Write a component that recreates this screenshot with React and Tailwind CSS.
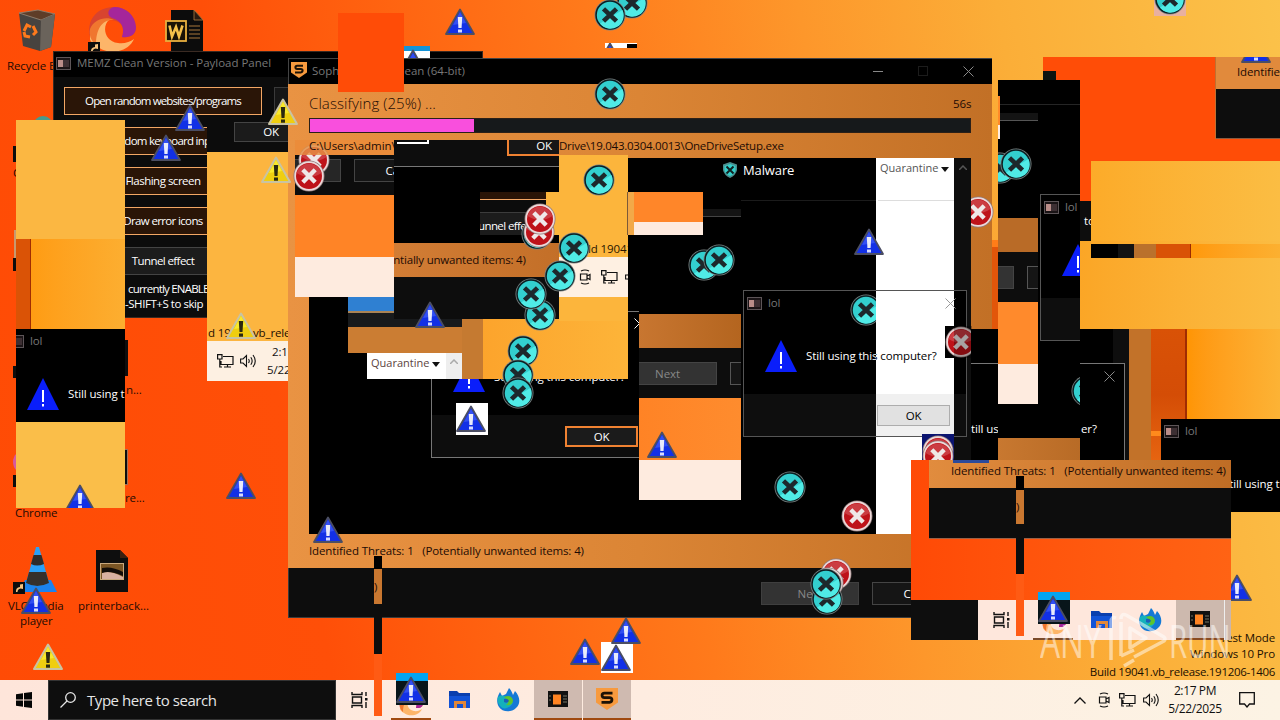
import React from 'react';
import clsx from 'clsx';

// everything on the desktop canvas is a free floating piece
const Box = ({ c, children }) => <div className={clsx('absolute overflow-hidden', c)}>{children}</div>;
const T = ({ c, children }) => (
  <span className={clsx('absolute whitespace-pre leading-[16px]', c)}>{children}</span>
);

const BlueWarn = ({ c }) => (
  <svg className={clsx('absolute w-8 h-8', c)} viewBox="0 0 32 32">
    <path d="M16 3.5 L30 28 H2 Z" fill="#1230e6" stroke="#4b4e63" strokeWidth="1.8" strokeLinejoin="round" />
    <path d="M16 6 L22 17 L9 19 Z" fill="#3350f2" />
    <path d="M13.800 11h4.400l-.6 11h-3.200z" fill="#e8ebfb" />
    <rect x="14" y="23.500" width="4" height="3" fill="#d5daff" />
  </svg>
);

const YellowWarn = ({ c }) => (
  <svg className={clsx('absolute w-8 h-8', c)} viewBox="0 0 32 32">
    <path d="M16 3.5 L30 28 H2 Z" fill="#efce10" stroke="#c9c3a2" strokeWidth="2" strokeLinejoin="round" />
    <path d="M16 6 L22 17 L9 19 Z" fill="#f8e92c" />
    <path d="M13.8 11h4.4l-.7 11h-3z" fill="#2b2910" />
    <rect x="14" y="23.5" width="4" height="3.2" fill="#2b2910" />
  </svg>
);

const FlatWarn = ({ c }) => (
  <svg className={clsx('absolute w-8 h-8', c)} viewBox="0 0 32 32">
    <path d="M16 0 L32 32 H0 Z" fill="#0a1efa" />
    <rect x="15" y="12" width="2" height="12" fill="#fff" />
    <rect x="15" y="26" width="2" height="2.5" fill="#fff" />
  </svg>
);

const Cyan = ({ c }) => (
  <svg className={clsx('absolute w-8 h-8', c)} viewBox="0 0 32 32">
    <circle cx="16" cy="16" r="15.5" fill="#7d8585" />
    <circle cx="16" cy="16" r="14.700" fill="#0b1f22" />
    <circle cx="16" cy="16" r="13.2" fill="#33cfcf" />
    <path d="M6 24.500a13.2 13.2 0 0 0 22.500 -13.500z" fill="#50ebe6" />
    <path d="M9.500 9.800 L22.500 22.200 M22.500 9.800 L9.500 22.200" stroke="#1d282c" strokeWidth="4.6" />
  </svg>
);

const Red = ({ c }) => (
  <svg className={clsx('absolute w-8 h-8', c)} viewBox="0 0 32 32">
    <circle cx="16" cy="16" r="15.5" fill="#8e7a7a" />
    <circle cx="16" cy="16" r="14.700" fill="#ecd8d8" />
    <circle cx="16" cy="16" r="13" fill="#be1219" />
    <path d="M3.5 13a13 13 0 0 1 25 0 q-12 8 -25 0z" fill="#cb3c42" />
    <path d="M9.800 9.800 L22.200 22.200 M22.200 9.800 L9.800 22.200" stroke="#efe8e8" strokeWidth="4.4" />
  </svg>
);

const AppIcon = ({ c }) => (
  <svg className={clsx('absolute w-[15px] h-[13px]', c)} viewBox="0 0 15 13">
    <rect x=".5" y=".5" width="14" height="12" fill="#1a1416" stroke="#5d5558" />
    <rect x="2" y="3" width="5" height="7" fill="#b98d89" />
    <rect x="7" y="3" width="6" height="7" fill="#3d2f33" />
  </svg>
);

const Close = ({ c, color = '#8a8a8a' }) => (
  <svg className={clsx('absolute w-[11px] h-[11px]', c)} viewBox="0 0 11 11">
    <path d="M.5 .5 L10.5 10.5 M10.5 .5 L.5 10.5" stroke={color} fill="none" />
  </svg>
);

const SophosLogo = ({ className }) => (
  <svg className={className} viewBox="0 0 16 16">
    <path d="M0 0H16V10.5L8 16L0 10.5Z" fill="#f79a3e" />
    <path d="M12 3.7H6.2Q4.4 3.7 4.4 5.3T6.2 7H9.8Q11.6 7 11.6 8.6T9.8 10.4H4" stroke="#1d1206" strokeWidth="2" fill="none" />
  </svg>
);

const TaskView = ({ className }) => (
  <svg className={className} viewBox="0 0 18 16" fill="none" stroke="#111" strokeWidth="1.4">
    <path d="M1 0V2.5H11V0M1 16V13.5H11V16M1.5 5H10.5V11H1.5ZM15 0V4M15 10V16" />
    <rect x="14" y="6" width="2.5" height="2.5" fill="#111" stroke="none" />
  </svg>
);

const Explorer = ({ className }) => (
  <svg className={className} viewBox="0 0 22 20">
    <path d="M0 1H8L10 3H21V18H0Z" fill="#0a3fae" />
    <path d="M0 6H21V18H0Z" fill="#1253d6" />
    <path d="M5 18V11H17V18H14V14H8V18Z" fill="#e0873a" />
  </svg>
);

const Firefox = ({ className }) => (
  <svg className={className} viewBox="0 0 24 24">
    <path d="M13 0C15 2 16 4 17 7L19 3C24 8 25 16 20 20C15 25 6 24 3 19C0 14 1 9 4 4L6 8L10 6Z" fill="#1479d6" />
    <path d="M2 9C6 6 10 8 11 11L17 14C15 20 8 22 5 19C2 16 1 12 2 9Z" fill="#14b0bc" />
    <path d="M8 9Q15 6 17 12Q17 18 10 17Q15 14 8 9Z" fill="#5cc42e" />
    <path d="M8 11Q12 10 13 13Q11 16 8 14Z" fill="#1b5fb8" />
  </svg>
);

const EdgeIcon = ({ className }) => (
  <svg className={className} viewBox="0 0 48 44">
    <path d="M2 30C-2 12 10 0 26 0C38 0 47 8 48 20C48 28 42 31 34 30C38 20 32 13 22 13C12 13 4 20 2 30Z" fill="#d8442f" />
    <path d="M26 0C38 0 47 8 48 20C48 28 42 31 34 30C37 21 34 14 24 11C18 8 20 1 26 0Z" fill="#a5269a" />
    <path d="M2 32C2 20 10 12 21 13C14 19 16 34 30 36C36 37 42 35 46 32C40 46 20 48 10 40C5 37 2 34 2 32Z" fill="#fdb569" />
    <path d="M2 22C6 12 18 9 26 13C14 12 8 22 8 38C3 34 1 28 2 22Z" fill="#f0762f" />
  </svg>
);

const ConsoleApp = ({ className }) => (
  <svg className={className} viewBox="0 0 20 16">
    <rect width="20" height="16" fill="#111" />
    <rect x="5" y="3.5" width="8" height="10" fill="#ff8423" />
    <path d="M15 5H19M15 8H19M15 11H19M1 5H3M1 9H3" stroke="#776" />
  </svg>
);

const Net = ({ className }) => (
  <svg className={className} viewBox="0 0 17 14" fill="none" stroke="#111" strokeWidth="1.2">
    <path d="M6 2.5H16V10.5H4V7M10.5 10.5V13M7 13H14M.6 .6H5V5H.6ZM2.8 5V13H5" />
  </svg>
);

const Speaker = ({ className }) => (
  <svg className={className} viewBox="0 0 17 14" fill="none" stroke="#111" strokeWidth="1.1">
    <path d="M.6 5H3L6.5 1.5V12.5L3 9H.6ZM8.5 5Q10 7 8.5 9M10.8 3.2Q13.5 7 10.8 10.8M13 1Q17.5 7 13 13" />
  </svg>
);

const Meet = ({ className }) => (
  <svg className={className} viewBox="0 0 12 16" fill="none" stroke="#111" strokeWidth="1.2">
    <path d="M1.5 5H8V11H1.5ZM8 7L11 5.5V10.5L8 9M2 2Q6 0 10 2M2 14Q6 16 10 14" />
  </svg>
);

const Shortcut = ({ c }) => (
  <svg className={clsx('absolute w-3 h-3', c)} viewBox="0 0 12 12">
    <rect width="12" height="12" fill="#0d0d0d" />
    <path d="M3 10Q2.5 5.5 7 5V2.5L10 2V7L7.5 6.5Q4.5 7 4.5 10Z" fill="#f6c37e" />
  </svg>
);

const WinBtn = ({ c, children }) => (
  <div className={clsx('absolute flex items-center justify-center whitespace-nowrap border', c)}>{children}</div>
);

const DesktopIcons = () => (
  <>
    <svg className="absolute left-[18px] top-[9px] w-[38px] h-[42px]" viewBox="0 0 38 42">
      <path d="M1 4L20 1L37 5L33 38L22 42L5 37Z" fill="#47433f" />
      <path d="M1 4L20 1L37 5L23 11Z" fill="#5e3d28" stroke="#9a8a78" strokeWidth=".8" />
      <path d="M23 11L37 5L33 38L22 42Z" fill="#6a635b" />
      <path d="M6 22L9 16L13 18M15 17L18 23L15 26M12 28L7 27L6 23" stroke="#ff7a1c" strokeWidth="3" fill="none" />
    </svg>
    <T c="left-[7px] top-[58px] tracking-[-0.1px]">Recycle Bin</T>
    <EdgeIcon className="absolute left-[88px] top-[7px] w-12 h-11" />
    <Shortcut c="left-[88px] top-[42px]" />
    <svg className="absolute left-[165px] top-[10px] w-[38px] h-[42px]" viewBox="0 0 38 42">
      <path d="M6 0H29L38 10V42H6Z" fill="#0c0c0c" />
      <path d="M29 0L38 10H29Z" fill="#2a1a10" stroke="#b07c40" strokeWidth=".8" />
      <rect x="1" y="11" width="20" height="20" fill="#1a1206" stroke="#e8b040" strokeWidth="1.8" />
      <path d="M4.5 15.5L7 26.5L11 17L14 26.5L17.5 15.5" stroke="#f4c04a" strokeWidth="2.6" fill="none" />
      <path d="M24 16H35M24 20H35M24 24H35M24 28H35" stroke="#a8763a" />
    </svg>

    <Box c="left-[33px] top-[116px] w-5 h-5 rounded-full bg-[#4a9a8c]" />
    <Box c="left-[13px] top-[146px] w-4 h-4 bg-[#0d0d0d]" />
    <T c="left-[13px] top-[165px]">C</T>
    <Box c="left-[13px] top-[258px] w-4 h-[13px] bg-[#0d0d0d]" />
    <Box c="left-[14px] top-[230px] w-4 h-7 bg-[#c79a70]" />
    <Box c="left-[13px] top-[366px] w-4 h-[12px] bg-[#0d0d0d]" />
    <Box c="left-[13px] top-[450px] w-6 h-6 rounded-full bg-[#d65aa0]" />
    <Box c="left-[13px] top-[475px] w-4 h-[12px] bg-[#0d0d0d]" />
    <Box c="left-[110px] top-[340px] w-[18px] h-9 bg-[#0d0d0d]" />
    <Box c="left-[110px] top-[449px] w-[18px] h-9 bg-[#0d0d0d] border border-[#a0705a]" />
    <T c="left-[126px] top-[382px]">n...</T>
    <T c="left-[125px] top-[490px]">re...</T>
    <T c="left-[15px] top-[505px] tracking-[-0.1px]">Chrome</T>

    <svg className="absolute left-[19px] top-[547px] w-[38px] h-[46px]" viewBox="0 0 38 46">
      <path d="M6 33H32L38 45H0Z" fill="#1b83ee" />
      <path d="M17 0H20L30 36Q18 42 7 36Z" fill="#2ba0f6" />
      <path d="M14.5 8H22.5L25 17Q18 20 12 17Z" fill="#2f2c2a" />
      <path d="M10 25H27L30 36Q18 42 7 36Z" fill="#35302c" />
    </svg>
    <Shortcut c="left-[13px] top-[582px]" />
    <T c="left-[8px] top-[598px]">VLC media</T>
    <T c="left-[20px] top-[613px]">player</T>
    <svg className="absolute left-[96px] top-[550px] w-8 h-[42px]" viewBox="0 0 32 42">
      <path d="M0 0H24L32 8V42H0Z" fill="#0e0e0e" />
      <path d="M24 0L32 8H24Z" fill="#3a2010" />
      <rect x="4.5" y="13.5" width="23" height="16" fill="#7a5524" stroke="#c9a87c" />
      <path d="M6 23Q14 20 27 27V29H6Z" fill="#d9b0a0" />
      <path d="M6 18Q16 16 27 22V26Q14 20 6 23Z" fill="#120c08" />
    </svg>
    <T c="left-[78px] top-[598px] tracking-[0px]">printerback...</T>
  </>
);

const PayloadPanel = () => (
  <Box c="left-[53px] top-[51px] w-[430px] h-[267px] bg-[#0c0c0c] border border-[#3a2a22] text-white">
    <Box c="left-0 top-0 w-[430px] h-[25px] bg-black" />
    <AppIcon c="left-[2px] top-[5px]" />
    <T c="left-[23px] top-[3px] text-[#777] tracking-[-0.02px]">MEMZ Clean Version - Payload Panel</T>
    <WinBtn c="left-[10px] top-[35px] w-[198px] h-7 bg-[#2a1507] border-[#f3a765] tracking-[-0.88px]">Open random websites/programs</WinBtn>
    <WinBtn c="left-[10px] top-[75px] w-[198px] h-7 bg-[#2a1507] border-[#f3a765] tracking-[-0.75px]">Random keyboard input</WinBtn>
    <WinBtn c="left-[10px] top-[115px] w-[198px] h-7 bg-[#2a1507] border-[#f3a765] tracking-[-0.5px]">Flashing screen</WinBtn>
    <WinBtn c="left-[10px] top-[155px] w-[198px] h-7 bg-[#2a1507] border-[#f3a765] tracking-[-0.65px]">Draw error icons</WinBtn>
    <WinBtn c="left-[10px] top-[195px] w-[198px] h-7 bg-[#1c1c1c] border-[#444] tracking-[-0.6px]">Tunnel effect</WinBtn>
    <WinBtn c="left-[220px] top-[35px] w-[198px] h-7 bg-[#161616] border-[#3a3a3a]" />
    <T c="left-[74px] top-[229px] tracking-[-0.8px]">currently ENABLED</T>
    <T c="left-[71px] top-[244px] tracking-[-0.45px]">-SHIFT+S to skip</T>
  </Box>
);

const LeftTiles = () => (
  <>
    <Box c="left-[16px] top-[120px] w-[109px] h-[119px] bg-[#fbb742]" />
    <Box c="left-[16px] top-[239px] w-[109px] h-[90px] bg-linear-to-r from-[#ff990a] to-[#fcae30]">
      <Box c="left-0 top-0 w-[15px] h-[90px] bg-[#da5306] border-r border-[#a02c02]" />
    </Box>
    <Box c="left-[16px] top-[329px] w-[109px] h-[93px] bg-black">
      <AppIcon c="left-[-7px] top-[6px]" />
      <T c="left-[14px] top-[4px] text-[#777]">lol</T>
      <FlatWarn c="left-[11px] top-[49px]" />
      <T c="left-[52px] top-[57px] text-white">Still using t</T>
    </Box>
    <Box c="left-[16px] top-[422px] w-[109px] h-[86px] bg-[#fabe49]">
      <BlueWarn c="left-[48px] top-[60px]" />
    </Box>

    <Box c="left-[207px] top-[116px] w-[81px] h-[36px] bg-[#0c0c0c]">
      <WinBtn c="left-[27px] top-[6px] w-[74px] h-[20px] bg-[#1b1b1b] border-[#444] text-white">OK</WinBtn>
    </Box>
    <Box c="left-[207px] top-[152px] w-[81px] h-[229px] bg-[#fcb540]">
      <T c="left-[1px] top-[173px] text-[#1c0d00]">d 19041.vb_release</T>
      <Box c="left-0 top-[189px] w-[81px] h-10 bg-[#fdf0e2] text-[#111]">
        <Net className="absolute left-[10px] top-[13px] w-[17px] h-[14px]" />
        <Speaker className="absolute left-[33px] top-[13px] w-[17px] h-[14px]" />
        <T c="left-[65px] top-[3px]">2:17</T>
        <T c="left-[60px] top-[21px]">5/22</T>
      </Box>
    </Box>
    <BlueWarn c="left-[174px] top-[102px]" />
    <BlueWarn c="left-[150px] top-[132px]" />
  </>
);

const SophosWindow = () => (
  <Box c="left-[288px] top-[58px] w-[704px] h-[560px] bg-linear-to-r from-[#e99343] via-[#db8535] to-[#c27026]">
    <Box c="left-0 top-0 w-[704px] h-[26px] bg-black border-t border-l border-[#444]" />
    <SophosLogo className="absolute left-[3px] top-[4px] w-4 h-4" />
    <T c="left-[24px] top-[5px] text-[#777] tracking-[0px]">Sophos Scan &amp; Clean (64-bit)</T>
    <Box c="left-[585px] top-[13px] w-[10px] h-px bg-[#888]" />
    <Box c="left-[630px] top-[8px] w-[10px] h-[10px] border border-[#1c1c1c]" />
    <Close c="left-[675px] top-[8px]" />
    <T c="left-[21px] top-[35px] leading-[20px] text-[15px] tracking-[0.08px] font-light">Classifying (25%) ...</T>
    <T c="left-[665px] top-[38px]">56s</T>
    <Box c="left-[21px] top-[60px] w-[662px] h-[15px] bg-[#16191b] border border-[#2b2018]">
      <Box c="left-0 top-0 w-[164px] h-[13px] bg-[#f94fdd]" />
    </Box>
    <T c="left-[271px] top-[80px] tracking-[-0.25px]">Drive\19.043.0304.0013\OneDriveSetup.exe</T>

    {/* result list */}
    <Box c="left-[21px] top-[100px] w-[662px] h-[376px] bg-black">
      <svg className="absolute left-[414px] top-[4px] w-[14px] h-4" viewBox="0 0 14 16">
        <path d="M7 0L14 2.5V8Q13 13 7 16Q1 13 0 8V2.5Z" fill="#4b8e8e" />
        <path d="M7 2L12.5 4V8Q12 12 7 14Q2 12 1.500 8V4Z" fill="#33cfcb" />
        <path d="M3.500 4.500L10.500 11.500M10.500 4.500L3.500 11.500" stroke="#122" strokeWidth="2" />
      </svg>
      <T c="left-[434px] top-[4px] text-[13px] text-white">Malware</T>
      <Box c="left-[432px] top-[42px] w-[135px] h-px bg-[#1b1b1b]" />
      <Box c="left-[567px] top-0 w-[78px] h-[376px] bg-white text-[#555]">
        <T c="left-[4px] top-[2px] text-[11px] tracking-[0px]">Quarantine</T>
        <svg className="absolute left-[65px] top-[9px] w-[8px] h-[5px]" viewBox="0 0 8 5"><path d="M0 0H8L4 5Z" fill="#111" /></svg>
        <Box c="left-[2px] top-[42px] w-[76px] h-px bg-[#ddd]" />
      </Box>
      <Box c="left-[645px] top-0 w-[17px] h-[376px] bg-[#0e0e0e]">
        <svg className="absolute left-[5px] top-[7px] w-2 h-[5px]" viewBox="0 0 8 5"><path d="M0 5L4 1L8 5" stroke="#555" strokeWidth="1.5" fill="none" /></svg>
      </Box>
    </Box>
    <T c="left-[21px] top-[485px]">{'Identified Threats: 1   (Potentially unwanted items: 4)'}</T>
    <Box c="left-0 top-[510px] w-[704px] h-[50px] bg-[#0d0d0d] border-b border-l border-[#3b3b3b] text-white">
      <WinBtn c="left-[472px] top-[14px] w-[98px] h-[23px] bg-[#333] border-[#3f3f3f] text-[#888]">Next</WinBtn>
      <WinBtn c="left-[583px] top-[14px] w-[98px] h-[23px] bg-[#151515] border-[#444]">Cancel</WinBtn>
    </Box>
  </Box>
);

const TopPieces = () => (
  <>
    <Box c="left-[338px] top-[13px] w-[66px] h-[79px] bg-[#ff4c07]" />
    <Box c="left-[404px] top-[46px] w-[26px] h-[12px] bg-white">
      <Box c="left-0 top-0 w-[26px] h-[5px] bg-[#1594d8]" />
      <BlueWarn c="left-[-7px] top-[1px]" />
    </Box>
    <Box c="left-[605px] top-[43px] w-[32px] h-[5px] bg-white">
      <BlueWarn c="left-[-11px] top-[-3px]" />
      <Box c="left-[22px] top-[1px] w-[10px] h-1 bg-black" />
    </Box>
    <BlueWarn c="left-[444px] top-[6px]" />
    <Cyan c="left-[616px] top-[-13px]" />
    <Cyan c="left-[594px] top-[-1px]" />
    <Cyan c="left-[594px] top-[78px]" />
  </>
);

const MiddlePieces = () => (
  <>
    <Box c="left-[295px] top-[140px] w-[99px] h-[157px] bg-[#ff8426]">
      <Box c="left-0 top-[15px] w-[99px] h-10 bg-[#0d0d0d]">
        <WinBtn c="left-[-52px] top-[4px] w-[98px] h-[23px] bg-[#262626] border-[#444]" />
        <WinBtn c="left-[59px] top-[4px] w-[98px] h-[23px] bg-[#151515] border-[#444] text-white">Cancel</WinBtn>
      </Box>
      <Red c="left-[3px] top-[4px]" />
      <Box c="left-0 top-0 w-[99px] h-[15px] bg-[#e68e40] opacity-80" />
      <Box c="left-0 top-[117px] w-[99px] h-10 bg-[#feebdf]" />
      <T c="left-[14px] top-[-2px] tracking-[-0.05px]">C:\Users\admin\</T>
    </Box>
    <Red c="left-[293px] top-[160px]" />

    <Box c="left-[394px] top-[140px] w-[165px] h-[179px] bg-black">
      <Box c="left-0 top-0 w-[165px] h-[27px] bg-[#0d0d0d] border-b border-[#777]" />
      <Box c="left-[3px] top-0 w-8 h-[4px] bg-white"><Box c="left-0 top-0 w-[30px] h-[2px] bg-[#0d0d0d]" /></Box>
      <WinBtn c="left-[113px] top-[-5px] w-[74px] h-[21px] border-2 border-[#f08232] bg-[#161616] text-white">OK</WinBtn>
      <Box c="left-[86px] top-[52px] w-[79px] h-[43px] bg-[#0c0c0c] text-white">
        <Box c="left-0 top-0 w-[79px] h-2 bg-[#2a1507] border-b border-[#f3a765]" />
        <Box c="left-0 top-5 w-[79px] h-7 bg-[#1c1c1c] border-t border-[#3c3c3c]" />
        <T c="left-[-2px] top-[26px] tracking-[-0.6px]">unnel effect</T>
      </Box>
      <Box c="left-0 top-[103px] w-[165px] h-[34px] bg-linear-to-r from-[#d27d35] to-[#c36f28]">
        <T c="left-[-7px] top-[9px] tracking-[-0.2px]">entially unwanted items: 4)</T>
      </Box>
      <Box c="left-0 top-[137px] w-[165px] h-[42px] bg-[#0d0d0d]" />
    </Box>

    <Box c="left-[348px] top-[297px] w-[46px] h-[16px] bg-[#2f80d2] border-b-2 border-[#a98355]" />
    <Box c="left-[348px] top-[313px] w-[114px] h-[14px] bg-[#181a1c]" />
    <Box c="left-[394px] top-[312px] w-[68px] h-[7px] bg-[#0d0d0d]" />
    <Box c="left-[348px] top-[327px] w-[114px] h-[26px] bg-[#cb7d33]" />
    <Box c="left-[462px] top-[319px] w-[21px] h-[60px] bg-[#c57a31]" />
    <Box c="left-[367px] top-[353px] w-[95px] h-[26px] bg-white">
      <T c="left-[4px] top-[2px] text-[11px] tracking-[0px] text-[#5c4440]">Quarantine</T>
      <svg className="absolute left-[65px] top-[9px] w-2 h-[5px]" viewBox="0 0 8 5"><path d="M0 0H8L4 5Z" fill="#111" /></svg>
      <Box c="left-[79px] top-0 w-4 h-[26px] bg-[#eee]">
        <svg className="absolute left-1 top-[6px] w-2 h-[5px]" viewBox="0 0 8 5"><path d="M0 5L4 1L8 5" stroke="#aaa" strokeWidth="1.5" fill="none" /></svg>
      </Box>
    </Box>

    {/* lower dialog, cut off at the top */}
    <Box c="left-[431px] top-[379px] w-[208px] h-[79px] bg-black border-l border-b border-[#777]">
      <FlatWarn c="left-[21px] top-[-19px]" />
      <T c="left-[62px] top-[-10px] text-white tracking-[-0.1px]">Still using this computer?</T>
      <Box c="left-0 top-[36px] w-[208px] h-[42px] bg-[#0d0d0d]" />
      <WinBtn c="left-[133px] top-[47px] w-[73px] h-[21px] border-2 border-[#f08232] bg-[#1b1b1b] text-white">OK</WinBtn>
      <Box c="left-[24px] top-[24px] w-8 h-8 bg-white"><BlueWarn c="left-[-1px] top-0" /></Box>
    </Box>
    <Box c="left-[483px] top-[319px] w-[145px] h-[60px] bg-linear-to-r from-[#fca42c] to-[#fdb439]" />
    <Box c="left-[559px] top-[155px] w-[69px] h-[166px] bg-[#fcb53c]">
      <T c="left-[29px] top-[86px] text-[#2a1500]">ld 19041.vb</T>
      <Box c="left-0 top-[102px] w-[69px] h-10 bg-[#fef0e2]">
        <Meet className="absolute left-[20px] top-[12px] w-3 h-4" />
        <Net className="absolute left-[42px] top-[13px] w-[17px] h-[14px]" />
        <Speaker className="absolute left-[66px] top-[13px] w-[17px] h-[14px]" />
      </Box>
    </Box>
    <Box c="left-[546px] top-[192px] w-[14px] h-[43px] bg-[#fcb53c]" />
    <Box c="left-[627px] top-[192px] w-[7px] h-[43px] bg-[#f2a948] border-l border-[#7b5a38]" />
    <Box c="left-[634px] top-[192px] w-[69px] h-[43px] bg-[#ff8629]">
      <Box c="left-0 top-[30px] w-[69px] h-[13px] bg-[#feebdf]" />
    </Box>
    <Box c="left-[703px] top-[209px] w-[38px] h-2 bg-[#141414] border-b border-[#444]" />
    <Box c="left-[628px] top-[311px] w-[11px] h-px bg-[#777]" />
    <Box c="left-[628px] top-[314px] w-[11px] h-5"><Close c="left-[6px] top-[4px]" color="#fff" /></Box>

    <Box c="left-[639px] top-[314px] w-[102px] h-[186px] bg-linear-to-r from-[#ff8325] to-[#fe8c2e]">
      <Box c="left-0 top-0 w-[102px] h-[34px] bg-linear-to-r from-[#c87630] to-[#b4651f]" />
      <Box c="left-0 top-[34px] w-[102px] h-[50px] bg-[#0d0d0d]">
        <WinBtn c="left-[-21px] top-[14px] w-[99px] h-[23px] bg-[#333] border-[#444] text-[#888]">Next</WinBtn>
        <WinBtn c="left-[91px] top-[14px] w-[98px] h-[23px] bg-[#151515] border-[#555]" />
      </Box>
      <Box c="left-0 top-[146px] w-[102px] h-10 bg-[#feebdf]" />
      <BlueWarn c="left-[7px] top-[115px]" />
    </Box>

    <BlueWarn c="left-[414px] top-[299px]" />
    <Cyan c="left-[583px] top-[164px]" />
    <Cyan c="left-[521px] top-[218px]" />
    <Red c="left-[523px] top-[216px]" />
    <Red c="left-[524px] top-[203px]" />
    <Cyan c="left-[558px] top-[232px]" />
    <Cyan c="left-[544px] top-[260px]" />
    <Cyan c="left-[524px] top-[299px]" />
    <Cyan c="left-[515px] top-[278px]" />
    <Cyan c="left-[507px] top-[335px]" />
    <Cyan c="left-[502px] top-[359px]" />
    <Cyan c="left-[502px] top-[377px]" />
    <Cyan c="left-[688px] top-[249px]" />
    <Cyan c="left-[703px] top-[244px]" />
    <Cyan c="left-[774px] top-[471px]" />
    <Red c="left-[841px] top-[500px]" />
    <BlueWarn c="left-[312px] top-[514px]" />
    <BlueWarn c="left-[853px] top-[226px]" />
    <Box c="left-[971px] top-[194px] w-[24px] h-[36px]"><Red c="left-[-9px] top-[2px]" /></Box>
    <Red c="left-[820px] top-[558px]" />
    <Red c="left-[812px] top-[567px]" />
    <Cyan c="left-[811px] top-[583px]" />
    <Cyan c="left-[810px] top-[568px]" />
  </>
);

// the message box lies half over the white column
const LolDialog = () => (
  <>
    <Box c="left-[743px] top-[290px] w-[224px] h-[147px] bg-black border border-[#555]">
      <Box c="left-0 top-[103px] w-[222px] h-[42px] bg-[#0e0e0e]" />
      <AppIcon c="left-[3px] top-[6px]" />
      <T c="left-[24px] top-[4px] text-[#777]">lol</T>
      <FlatWarn c="left-[21px] top-[49px]" />
      <Cyan c="left-[106px] top-[3px]" />
      <T c="left-[62px] top-[57px] text-white">Still using this</T>
      <Box c="left-[132px] top-0 w-[78px] h-[145px] bg-white">
        <Box c="left-0 top-[103px] w-[78px] h-[42px] bg-[#f0f0f0]" />
        <WinBtn c="left-[1px] top-[114px] w-[73px] h-[21px] bg-[#e1e1e1] border-[#adadad] text-black">OK</WinBtn>
        <T c="left-[-70px] top-[57px] text-black">Still using this computer?</T>
      </Box>
      <Close c="left-[201px] top-[7px]" color="#999" />
      <Box c="left-[201px] top-[35px] w-[9px] h-8 bg-black" />
    </Box>
    <Red c="left-[945px] top-[326px]" />
    <Box c="left-[954px] top-[326px] w-[18px] h-8 bg-black/30" />
    <Box c="left-[922px] top-[434px] w-8 h-[26px] bg-[#0b1470]">
      <Red c="left-0 top-[1px]" />
      <Red c="left-0 top-[6px]" />
    </Box>
  </>
);

const RightPieces = () => (
  <>
    <Box c="left-[992px] top-[240px] w-[6px] h-[89px] bg-[#e2560a] border-t-[7px] border-[#ff7d18]" />
    <Box c="left-[1043px] top-[57px] w-[237px] h-[144px] bg-[#ff4d07]">
      <Box c="left-0 top-[14px] w-[13px] h-[10px] bg-[#0d1410]" />
      <Box c="left-[172px] top-0 w-[65px] h-[82px] bg-[#e18a3c] border-l border-[#c07030]">
        <Box c="left-0 top-[32px] w-[65px] h-[50px] bg-[#0d0d0d] border-b border-[#8a5a40]" />
        <Box c="left-[24px] top-0 w-9 h-[6px]"><BlueWarn c="left-0 top-[-23px]" /></Box>
        <T c="left-[21px] top-[7px]">Identifie</T>
      </Box>
    </Box>
    <Box c="left-[1154px] top-0 w-8 h-4 bg-[#e8b0a0]"><Cyan c="left-0 top-[-17px]" /></Box>

    {/* message box behind the right tiles */}
    <Box c="left-[971px] top-[329px] w-[158px] h-[131px] bg-black">
      <Box c="left-[142px] top-0 w-4 h-[131px] bg-[#0e0e0e]" />
      <Box c="left-[-10px] top-[34px] w-[164px] h-[110px] bg-black border border-[#777]">
        <Close c="left-[142px] top-[7px]" />
        <T c="left-[9px] top-[57px] text-white">till us</T>
        <T c="left-[119px] top-[57px] text-white">er?</T>
      </Box>
    </Box>
    <Box c="left-[998px] top-[80px] w-[82px] h-[358px] bg-black">
      <Box c="left-0 top-[24px] w-[82px] h-px bg-[#252525]" />
      <Box c="left-0 top-[33px] w-10 h-2 bg-[#141414] border-b border-[#555]" />
      <Box c="left-0 top-[16px] w-[2px] h-[29px] bg-[#ff8a2a]" />
      <Box c="left-0 top-[45px] w-[2px] h-[14px] bg-[#feebdf]" />
      <Cyan c="left-[-14px] top-[72px]" />
      <Cyan c="left-[2px] top-[68px]" />
      <Box c="left-0 top-[138px] w-10 h-[186px] bg-[#ff8a2c]">
        <Box c="left-0 top-0 w-10 h-[34px] bg-[#b96b27]" />
        <Box c="left-0 top-[34px] w-10 h-[50px] bg-[#0d0d0d]">
          <WinBtn c="left-[-80px] top-[14px] w-[96px] h-[23px] bg-[#333] border-[#444]" />
          <WinBtn c="left-[29px] top-[14px] w-[96px] h-[23px] bg-[#151515] border-[#555]" />
        </Box>
        <Box c="left-0 top-[146px] w-10 h-10 bg-[#feebdf]" />
      </Box>
      <Box c="left-[42px] top-[114px] w-[60px] h-[147px] bg-black border border-[#555]">
        <AppIcon c="left-[3px] top-[6px]" />
        <T c="left-[24px] top-[4px] text-[#777]">lol</T>
        <FlatWarn c="left-[21px] top-[49px]" />
        <Box c="left-0 top-[103px] w-[60px] h-[44px] bg-[#0e0e0e]" />
      </Box>
      <Cyan c="left-[73px] top-[295px]" />
    </Box>
    <Box c="left-[998px] top-[438px] w-[82px] h-[22px] bg-linear-to-r from-[#c87830] to-[#b86b26]" />
    <Box c="left-[1080px] top-[201px] w-[11px] h-10 bg-[#0d0d0d]"><T c="left-[4px] top-[12px] text-white">to</T></Box>
    <Box c="left-[1091px] top-[161px] w-[189px] h-[83px] bg-linear-to-r from-[#fcab29] to-[#fbbd43]" />
    <Box c="left-[1080px] top-[241px] w-[200px] h-[88px] bg-linear-to-r from-[#fba626] to-[#fbbc42]" />
    <div className="absolute left-[1091px] top-[244px] w-[189px] h-[14px] flex">
      <div className="w-[27px] bg-black" />
      <div className="w-4 bg-[#131313]" />
      <div className="w-[22px] bg-[#ba712c]" />
      <div className="w-[34px] bg-[#d95206]" />
      <div className="w-px bg-[#9a2a02]" />
      <div className="flex-1 bg-linear-to-r from-[#ff990a] to-[#fcb030]" />
    </div>
    <div className="absolute left-[1129px] top-[329px] w-[151px] h-[131px] flex">
      <div className="w-[22px] bg-[#c27229]" />
      <div className="w-[34px] bg-linear-to-b from-[#d95206] via-[#d44d06] to-[#e66410]" />
      <div className="w-[2px] bg-[#a02c02]" />
      <div className="flex-1 bg-linear-to-r from-[#ff9504] to-[#fcb335]" />
    </div>
    <Box c="left-[1151px] top-[431px] w-[10px] h-[5px] bg-[#ff8a1c]" />
    <Box c="left-[1161px] top-[419px] w-[119px] h-[93px] bg-black">
      <AppIcon c="left-[3px] top-[6px]" />
      <T c="left-[24px] top-[4px] text-[#777]">lol</T>
      <T c="left-[62px] top-[57px] text-white">Still using t</T>
    </Box>
  </>
);

const BuildInfo = () => (
  <div className="absolute right-[5px] top-[630px] flex flex-col items-end text-[#1c0f00] whitespace-nowrap">
    <span className="h-4 leading-[16px]">Test Mode</span>
    <span className="h-[17px] leading-[16px]">Windows 10 Pro</span>
    <span className="h-4 leading-[18px] tracking-[-0.3px]">Build 19041.vb_release.191206-1406</span>
  </div>
);

const BottomTile = () => (
  <>
    <Box c="left-[911px] top-[460px] w-[320px] h-[180px] bg-linear-to-r from-[#ff4a06] to-[#ff6314]">
      <Box c="left-[18px] top-0 w-[302px] h-[79px] bg-linear-to-r from-[#e18c3e] to-[#bf6d25] border-b border-[#9b6046]">
        <Box c="left-[24px] top-0 w-9 h-[3px] bg-[#2b4a9a]" />
        <T c="left-[22px] top-[3px]">{'Identified Threats: 1   (Potentially unwanted items: 4)'}</T>
        <Box c="left-0 top-[28px] w-[302px] h-[50px] bg-[#0d0d0d]" />
      </Box>
      <div className="absolute left-0 top-[140px] w-[320px] h-10 flex bg-[#fee7dc]">
        <div className="w-[67px] bg-[#0e0e0e]" />
        <div className="w-12 flex items-center justify-center"><TaskView className="w-[18px] h-4" /></div>
        <div className="w-[7px]" />
        <div className="w-[40px] mr-[7px] border-b-2 border-[#7a4b2a]" />
        <div className="w-[44px] flex items-center justify-center"><Explorer className="w-[22px] h-5" /></div>
        <div className="w-[52px] flex items-center justify-center"><Firefox className="w-6 h-6" /></div>
        <div className="w-[48px] flex items-center justify-center bg-[#cdb9ae] border-b-2 border-[#8a4b20]"><ConsoleApp className="w-5 h-4" /></div>
        <div className="flex-1 bg-[#ccb6aa] border-l border-[#eee]" />
      </div>
      <EdgeIcon className="absolute left-[131px] top-[152px] w-6 h-[22px]" />
      <Box c="left-[127px] top-[132px] w-8 h-8 bg-[#08151a] border-t-8 border-[#04a4f0]" />
      <BlueWarn c="left-[126px] top-[133px]" />
      <div className="absolute left-[105px] top-[16px] w-2 h-[160px] flex flex-col">
        <div className="h-[14px] bg-black" />
        <div className="h-[34px] bg-[#c97730] overflow-hidden leading-[34px]">)</div>
        <div className="h-[50px] bg-[#0d0d0d]" />
        <div className="flex-1 bg-[#ff5b14]" />
      </div>
    </Box>
    <Box c="left-[1231px] top-[572px] w-6 h-8"><BlueWarn c="left-[-10px] top-0" /></Box>
    {/* recorder watermark */}
    <div className="absolute left-[1040px] top-[616px] h-[52px] opacity-50 text-white">
      <span className="absolute left-0 top-[-2px] text-[46px] leading-[52px] font-normal font-['Open_Sans'] origin-left scale-x-[0.69]">ANY</span>
      <svg className="absolute left-[68px] top-[-6px] w-[60px] h-[58px]" viewBox="0 0 60 58" fill="none" stroke="#fff" strokeWidth="3.500" strokeLinejoin="round">
        <path d="M3 50V12Q3 6 8 8M13 12V46M13 9Q13 3 18 5L56 27Q58 29 56 31L26 47M22 18V38L38 28Z" />
        <path d="M13 46L26 40M16 56L26 50" />
      </svg>
      <span className="absolute left-[129px] top-[-2px] text-[46px] leading-[52px] font-normal font-['Open_Sans'] origin-left scale-x-[0.64]">RUN</span>
    </div>
  </>
);

const Taskbar = () => (
  <div className="absolute left-0 top-[680px] w-[1280px] h-10 flex items-stretch bg-linear-to-r from-[#fee5da] via-[#feece0] to-[#fcf3e4] text-[#111]">
    <div className="w-12 flex items-center justify-center">
      <svg className="w-4 h-4" viewBox="0 0 16 16"><path d="M0 2.200L7 1.200V7.500H0ZM8 1L16 0V7.500H8ZM0 8.500H7V14.800L0 13.800ZM8 8.500H16V16L8 15Z" fill="#050505" /></svg>
    </div>
    <div className="w-72 flex items-center bg-[#0e0e0e] border border-[#333] text-[#e6e6e6]">
      <svg className="w-4 h-4 ml-[11px] mr-[11px]" viewBox="0 0 16 16" fill="none" stroke="#e6e6e6" strokeWidth="1.300"><circle cx="10.500" cy="5.500" r="4.800" /><path d="M7 9L.500 15.500" /></svg>
      <span className="text-[15px] tracking-[-0.45px]">Type here to search</span>
    </div>
    <div className="w-12 flex items-center justify-center"><TaskView className="w-[18px] h-4" /></div>
    <div className="w-[54px] flex items-center justify-center pb-0"><EdgeIcon className="w-6 h-6 mt-2" /></div>
    <div className="w-[44px] flex items-center justify-center"><Explorer className="w-[22px] h-5" /></div>
    <div className="w-[52px] flex items-center justify-center"><Firefox className="w-6 h-6" /></div>
    <div className="w-12 flex items-center justify-center bg-[#cfbab0] border-b-2 border-[#a04a10]"><ConsoleApp className="w-5 h-4" /></div>
    <div className="w-[48px] ml-px flex items-center justify-center bg-[#cfbab0] border-b-2 border-[#a04a10]"><SophosLogo className="w-[22px] h-[22px]" /></div>
    <div className="flex-1" />
    <div className="flex items-center gap-[11px]">
      <svg className="w-3 h-[7px] mr-px" viewBox="0 0 12 7"><path d="M.500 6.500L6 1L11.500 6.500" fill="none" stroke="#111" strokeWidth="1.300" /></svg>
      <Meet className="w-3 h-4" />
      <Net className="w-[17px] h-[14px] -ml-0.5" />
      <Speaker className="w-[17px] h-[14px] -ml-1" />
    </div>
    <div className="w-[70px] flex flex-col items-center justify-center text-[12px] leading-[18px] tracking-[-0.38px]">
      <span>2:17 PM</span>
      <span>5/22/2025</span>
    </div>
    <div className="w-[50px] flex items-center justify-center">
      <svg className="w-4 h-4 -ml-4" viewBox="0 0 16 16"><path d="M.700 .700H15.300V12H10.500L8 15L5.500 12H.700Z" fill="none" stroke="#111" strokeWidth="1.300" /></svg>
    </div>
  </div>
);

const App = () => {
  return (
    <div className="relative w-[1280px] h-[720px] overflow-hidden bg-[linear-gradient(79deg,#ff4b05_0%,#ff4f08_24%,#ff6210_36%,#ff7a1b_51%,#fd972b_66%,#fbae38_80%,#fbc24a_100%)] font-['Open_Sans','Noto_Sans',sans-serif] text-[11.5px] tracking-[-0.12px] text-[#1d0b04]">
      <DesktopIcons />
      <PayloadPanel />
      <LeftTiles />
      <SophosWindow />
      <TopPieces />
      <MiddlePieces />
      <LolDialog />
      <RightPieces />
      <BuildInfo />
      <BottomTile />
      <Taskbar />

      {/* stray icons */}
      <YellowWarn c="left-[267px] top-[96px]" />
      <YellowWarn c="left-[260px] top-[154px]" />
      <YellowWarn c="left-[225px] top-[310px]" />
      <YellowWarn c="left-[32px] top-[641px]" />
      <BlueWarn c="left-[225px] top-[470px]" />
      <BlueWarn c="left-[20px] top-[585px]" />
      <BlueWarn c="left-[569px] top-[636px]" />
      <Box c="left-[601px] top-[642px] w-8 h-[31px] bg-white"><BlueWarn c="left-[-1px] top-0" /></Box>
      <BlueWarn c="left-[610px] top-[615px]" />
      <Box c="left-[396px] top-[673px] w-8 h-8 bg-[#08151a] border-t-8 border-[#04a4f0]" />
      <BlueWarn c="left-[395px] top-[674px]" />
      <Box c="left-[391px] top-[718px] w-10 h-0.5 bg-[#a04a10]" />
      <div className="absolute left-[374px] top-[556px] w-2 h-[160px] flex flex-col">
        <div className="h-[13px] bg-black" />
        <div className="h-[35px] bg-[#c97730] overflow-hidden leading-[36px]">)</div>
        <div className="h-[50px] bg-[#0d0d0d]" />
        <div className="flex-1 bg-[#ff5b14]" />
      </div>
    </div>
  );
};

export default App;
